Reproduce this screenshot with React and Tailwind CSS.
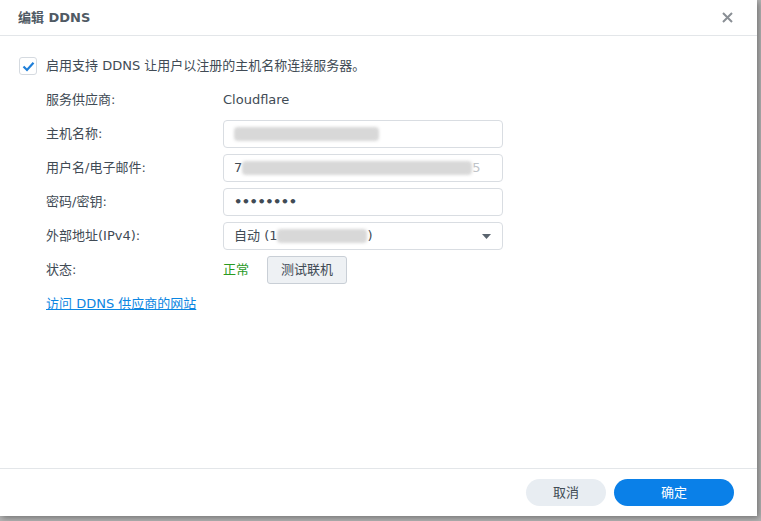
const font = { fontFamily: '"DejaVu Sans", "Noto Sans CJK SC", sans-serif' }

function Blur({ w }) {
  return (
    <span className={`inline-block h-[14px] ${w} rounded-sm bg-[#d8d8d8] blur-[1.5px] align-middle`} />
  )
}

function Row({ label, children }) {
  return (
    <div className="flex h-[28px] items-center">
      <div className="w-[177px] text-[13px] text-[#414b55]">{label}</div>
      <div className="flex items-center">{children}</div>
    </div>
  )
}

function Field({ children }) {
  return (
    <div className="flex h-[28px] w-[280px] items-center rounded-[4px] border border-[#d9dde2] bg-white px-[10px] text-[13px] text-[#414b55]">
      {children}
    </div>
  )
}

export default function App() {
  return (
    <div className="h-[521px] w-[761px] bg-[#b4b4b4]" style={font}>
      <div className="flex h-[516px] w-[757px] flex-col bg-white shadow-[2px_2px_6px_rgba(0,0,0,0.35)]">
        {/* Header */}
        <div className="flex h-[36px] shrink-0 items-center justify-between border-b border-[#e3e6e9] pl-[18px] pr-[24px]">
          <span className="text-[13px] font-bold text-[#505a64]">编辑 DDNS</span>
          <svg width="11" height="11" viewBox="0 0 11 11" className="mt-[-1px]">
            <path d="M1 1 L10 10 M10 1 L1 10" stroke="#8a8f95" strokeWidth="2" />
          </svg>
        </div>

        {/* Body */}
        <div className="flex-1 pl-[19px] pt-[21px]">
          <div className="flex h-[18px] items-center gap-[9px]">
            <div className="flex h-[18px] w-[18px] items-center justify-center rounded-[3px] border border-[#d5dae0] bg-white">
              <svg width="13" height="11" viewBox="0 0 13 11">
                <path d="M1.5 5.5 L5 9 L11.5 1.8" fill="none" stroke="#1f7fd9" strokeWidth="2.2" />
              </svg>
            </div>
            <span className="text-[13px] text-[#414b55]">启用支持 DDNS 让用户以注册的主机名称连接服务器。</span>
          </div>

          <div className="mt-[11px] flex flex-col gap-[6px] pl-[27px]">
            <Row label="服务供应商:">
              <span className="text-[13px] text-[#414b55]">Cloudflare</span>
            </Row>
            <Row label="主机名称:">
              <Field>
                <Blur w="w-[145px]" />
              </Field>
            </Row>
            <Row label="用户名/电子邮件:">
              <Field>
                <span>7</span>
                <Blur w="w-[230px]" />
                <span className="text-[#c0c4c8]">5</span>
              </Field>
            </Row>
            <Row label="密码/密钥:">
              <Field>
                <span className="text-[13px] font-bold tracking-[-0.5px] text-[#414b55]">••••••••</span>
              </Field>
            </Row>
            <Row label="外部地址(IPv4):">
              <Field>
                <span>自动 (1</span>
                <Blur w="w-[90px]" />
                <span>)</span>
                <span className="flex-1" />
                <svg width="9" height="5" viewBox="0 0 9 5" className="mr-[1px]">
                  <path d="M0 0 H9 L4.5 5 Z" fill="#5a646e" />
                </svg>
              </Field>
            </Row>
            <Row label="状态:">
              <span className="text-[13px] text-[#2a9a1f]">正常</span>
              <button className="ml-[18px] h-[28px] w-[80px] rounded-[3px] border border-[#c9cfd6] bg-[#eef1f4] text-[13px] text-[#414b55]">
                测试联机
              </button>
            </Row>
            <div className="flex h-[28px] items-center">
              <a className="text-[13px] text-[#0b86e2] underline">访问 DDNS 供应商的网站</a>
            </div>
          </div>
        </div>

        {/* Footer */}
        <div className="flex h-[48px] shrink-0 items-start justify-end gap-[8px] border-t border-[#e3e6e9] pr-[23px] pt-[10px]">
          <button className="h-[27px] w-[80px] rounded-full bg-[#e8edf2] text-[13px] text-[#414b55]">取消</button>
          <button className="h-[27px] w-[120px] rounded-full bg-[#0a80e8] text-[13px] text-white">确定</button>
        </div>
      </div>
    </div>
  )
}
